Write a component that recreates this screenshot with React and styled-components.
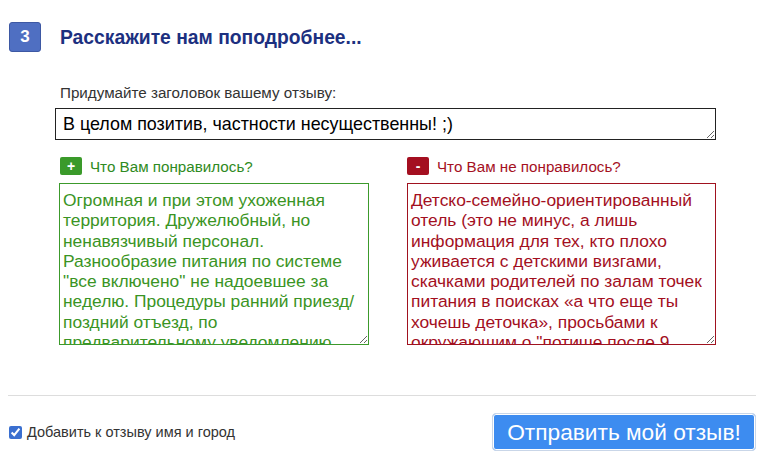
import React from "react";
import styled, { createGlobalStyle } from "styled-components";

const GlobalStyle = createGlobalStyle`
  body {
    margin: 0;
    background: #fff;
    font-family: "Liberation Sans", Arial, sans-serif;
  }
`;

const Page = styled.div`
  width: 764px;
  height: 463px;
  box-sizing: border-box;
  padding-top: 22px;
  overflow: hidden;
`;

const Header = styled.div`
  display: flex;
  align-items: center;
  padding-left: 9px;
  gap: 19px;
`;

const StepBadge = styled.div`
  width: 32px;
  height: 30px;
  box-sizing: border-box;
  display: flex;
  align-items: center;
  justify-content: center;
  background: #4f6fc2;
  border: 1px solid #3d58a3;
  border-radius: 3px;
  color: #fff;
  font-weight: bold;
  font-size: 17px;
`;

const Heading = styled.h2`
  margin: 2px 0 0 0;
  font-size: 19.3px;
  font-weight: bold;
  color: #1c3080;
`;

const Form = styled.div`
  margin: 32px 0 0 55px;
  width: 661px;
`;

const FieldLabel = styled.div`
  padding-left: 5px;
  font-size: 15.2px;
  color: #333;
  margin-bottom: 7px;
`;

const TitleInput = styled.textarea`
  display: block;
  width: 661px;
  height: 32px;
  box-sizing: border-box;
  margin: 0;
  padding: 5px 7px;
  border: 1px solid #222;
  font-family: "Liberation Sans", Arial, sans-serif;
  font-size: 17.9px;
  line-height: 21px;
  color: #000;
  resize: both;
  overflow: hidden;
  outline: none;
`;

const Columns = styled.div`
  display: grid;
  grid-template-columns: 310px 309px;
  column-gap: 38px;
  margin: 17px 0 0 4px;
`;

const Column = styled.div`
  display: flex;
  flex-direction: column;
`;

const OpinionLabel = styled.div`
  display: flex;
  align-items: center;
  gap: 8px;
  height: 18px;
  padding-left: ${(p) => (p.$tone === "good" ? "1px" : "0")};
  font-size: 15.2px;
  color: ${(p) => (p.$tone === "good" ? "#2f8a22" : "#a5111f")};
  margin-bottom: 8px;
`;

const Sign = styled.span`
  width: 22px;
  height: 18px;
  border-radius: 2px;
  display: flex;
  align-items: center;
  justify-content: center;
  background: ${(p) => (p.$tone === "good" ? "#3a9a2a" : "#a40f20")};
  color: #fff;
  font-weight: bold;
  font-size: 14px;
`;

const Opinion = styled.textarea`
  display: block;
  width: ${(p) => (p.$tone === "good" ? "310px" : "309px")};
  height: 162px;
  box-sizing: border-box;
  margin: 0;
  padding: 6px 3px 0 3px;
  border: 1px solid ${(p) => (p.$tone === "good" ? "#3c9a2c" : "#a0121f")};
  font-family: "Liberation Sans", Arial, sans-serif;
  font-size: 17.4px;
  line-height: 20.3px;
  color: ${(p) => (p.$tone === "good" ? "#3a9424" : "#a30f1e")};
  resize: both;
  overflow: hidden;
  outline: none;
`;

const Divider = styled.hr`
  margin: 50px 8px 0 8px;
  border: none;
  border-top: 1px solid #ddd;
`;

const Footer = styled.div`
  display: flex;
  align-items: center;
  justify-content: space-between;
  padding: 17px 8px 0 8px;
`;

const CheckLabel = styled.label`
  display: flex;
  align-items: center;
  gap: 5px;
  font-size: 14.5px;
  color: #333;
`;

const Check = styled.input`
  margin: 0 0 0 1px;
  width: 13px;
  height: 13px;
  accent-color: #3a6fd0;
`;

const SubmitButton = styled.button`
  height: 38px;
  padding: 0 10px;
  width: 264px;
  box-sizing: border-box;
  border: 1px solid #c9d6e8;
  box-shadow: inset 0 0 0 1px #fff;
  border-radius: 4px;
  background: #3d8cf0;
  color: #fff;
  font-family: "Liberation Sans", Arial, sans-serif;
  font-size: 22.7px;
  cursor: pointer;
`;

const good =
  'Огромная и при этом ухоженная территория. Дружелюбный, но ненавязчивый персонал. Разнообразие питания по системе "все включено" не надоевшее за неделю. Процедуры ранний приезд/ поздний отъезд, по предварительному уведомлению прошли без проблем.';

const bad =
  'Детско-семейно-ориентированный отель (это не минус, а лишь информация для тех, кто плохо уживается с детскими визгами, скачками родителей по залам точек питания в поисках «а что еще ты хочешь деточка», просьбами к окружающим о "потише после 9 вечера".';

export default function App() {
  return (
    <>
      <GlobalStyle />
      <Page>
        <Header>
          <StepBadge>3</StepBadge>
          <Heading>Расскажите нам поподробнее...</Heading>
        </Header>
        <Form>
          <FieldLabel>Придумайте заголовок вашему отзыву:</FieldLabel>
          <TitleInput readOnly value="В целом позитив, частности несущественны! ;)" />
          <Columns>
            <Column>
              <OpinionLabel $tone="good">
                <Sign $tone="good">+</Sign>
                Что Вам понравилось?
              </OpinionLabel>
              <Opinion $tone="good" readOnly value={good} />
            </Column>
            <Column>
              <OpinionLabel $tone="bad">
                <Sign $tone="bad">-</Sign>
                Что Вам не понравилось?
              </OpinionLabel>
              <Opinion $tone="bad" readOnly value={bad} />
            </Column>
          </Columns>
        </Form>
        <Divider />
        <Footer>
          <CheckLabel>
            <Check type="checkbox" defaultChecked />
            Добавить к отзыву имя и город
          </CheckLabel>
          <SubmitButton>Отправить мой отзыв!</SubmitButton>
        </Footer>
      </Page>
    </>
  );
}
